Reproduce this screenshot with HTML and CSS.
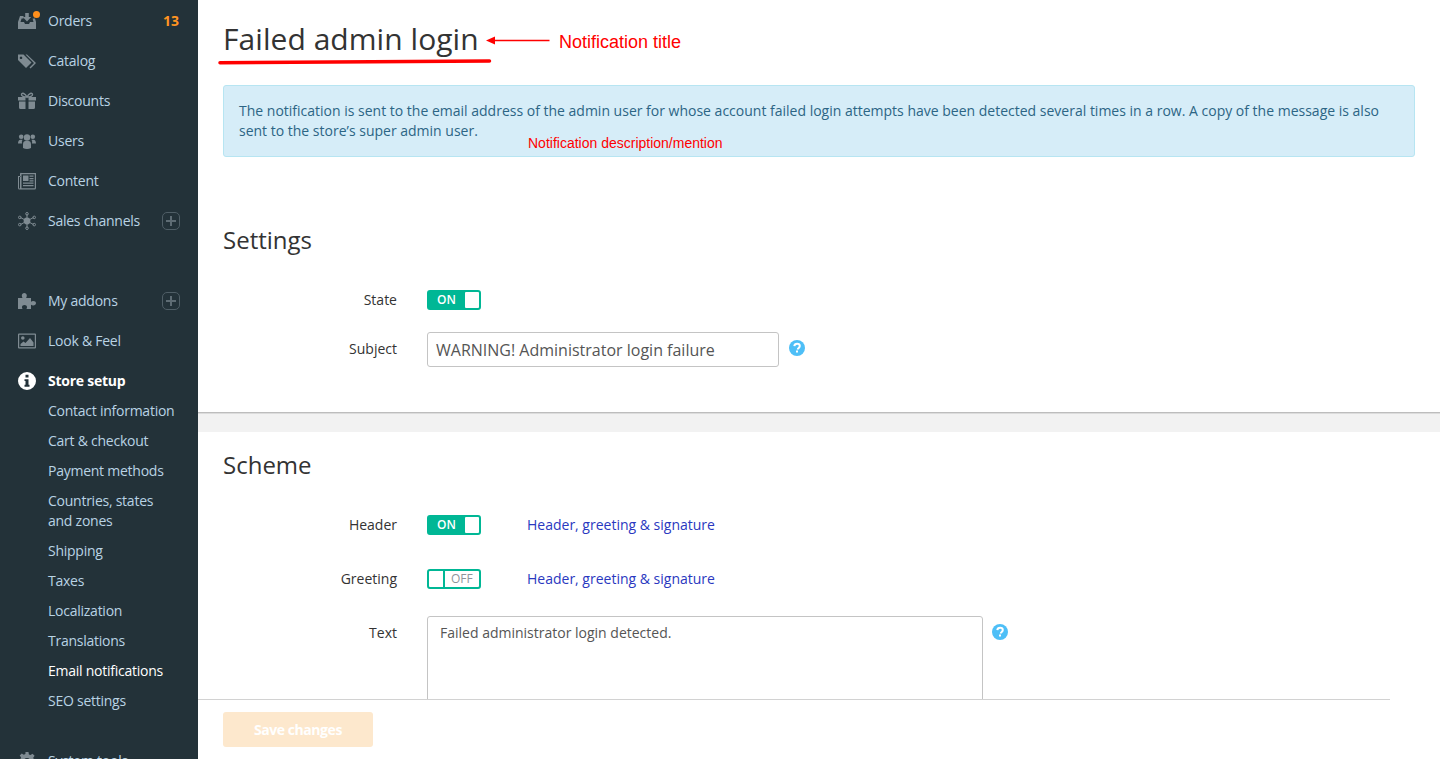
FILE: index.html
```html
<!DOCTYPE html>
<html lang="en">
<head>
    <meta charset="UTF-8">
    <title>Failed admin login</title>
    <link rel="stylesheet" href="styles.css">
</head>
<body>
<div class="page">
    <div class="sidebar">
        <ul class="nav">
            <li class="nav-item">
                <svg class="nav-icon" viewBox="0 0 18 18"><path d="M0 17v-7l2-6h3.500v2.400H3.600L2.500 10H6l1 2h4l1-2h3.500l-.9-3.600H17l1 3.600v7z"/><path d="M7.200 1h3.600v4h2.400L9 9.600 4.800 5h2.400z"/><circle class="dot" cx="18.500" cy="2.500" r="3.500"/></svg>
                <span class="nav-label">Orders</span>
                <span class="badge">13</span>
            </li>
            <li class="nav-item">
                <svg class="nav-icon" viewBox="0 0 18 18"><path d="M0 2.500h5.500l8 8-5.500 5.500-8-8zM3 4.500a1.300 1.300 0 1 0 .01 0z" fill-rule="evenodd"/><path d="M7.500 2.500h1.500l9 8.500-5.500 5.500-1-1 4.500-4.500z"/></svg>
                <span class="nav-label">Catalog</span>
            </li>
            <li class="nav-item">
                <svg class="nav-icon" viewBox="0 0 18 18"><path d="M0 5h7.500v3.500H0zM10.500 5H18v3.500h-7.500zM1 9.500h6.500V17H2.500A1.500 1.500 0 0 1 1 15.500zM10.500 9.500H17v6a1.500 1.500 0 0 1-1.500 1.500h-5z"/><path d="M9 5C7 1 4 .5 3.500 2.300 3.200 4 6 5 9 5c3 0 5.800-1 5.500-2.700C14 .5 11 1 9 5z" fill="none" stroke="#7f8b92" stroke-width="1.400"/></svg>
                <span class="nav-label">Discounts</span>
            </li>
            <li class="nav-item">
                <svg class="nav-icon" viewBox="0 0 18 18"><circle cx="3.200" cy="4.800" r="2.300"/><circle cx="14.800" cy="4.800" r="2.300"/><circle cx="9" cy="5.500" r="3.200"/><path d="M0 12c0-3 1-4.200 2.500-4.200h2A4.500 4.500 0 0 0 4 11.500H0zM18 12c0-3-1-4.200-2.500-4.200h-2a4.500 4.500 0 0 1 .5 3.700h4zM5 16v-3.500C5 10 6 9 7.500 9h3c1.500 0 2.500 1 2.500 3.500V16c-2.500 1.300-5.500 1.300-8 0z"/></svg>
                <span class="nav-label">Users</span>
            </li>
            <li class="nav-item">
                <svg class="nav-icon" viewBox="0 0 18 18"><path d="M3.500 1H18v15a1.500 1.500 0 0 1-1.500 1.500h-15A1.500 1.500 0 0 1 0 16V4h2.500v1H1v11a.5.5 0 0 0 1 0V2a1 1 0 0 1 1.500-1zM3.500 2.200V16a2 2 0 0 1-.1.300h13a.4.4 0 0 0 .4-.3V2.200z" fill-rule="evenodd"/><path d="M5 3.500h5.500V9H5zM11.500 3.500h4v1.200h-4zM11.500 6h4v1.200h-4zM11.500 8.300h4v1.200h-4zM5 10.500h10.500v1.200H5zM5 13h10.500v1.200H5z"/></svg>
                <span class="nav-label">Content</span>
            </li>
            <li class="nav-item">
                <svg class="nav-icon" viewBox="0 0 18 18"><g fill="none" stroke="#7f8b92" stroke-width="1"><path d="M9 9 9 2M9 9 9 16M9 9 2.500 5.500M9 9 15.500 5.500M9 9 2.500 12.500M9 9 15.500 12.500"/><circle cx="9" cy="1.800" r="1.300"/><circle cx="9" cy="16.200" r="1.300"/><circle cx="1.800" cy="5.400" r="1.300"/><circle cx="16.200" cy="5.400" r="1.300"/><circle cx="1.800" cy="12.600" r="1.300"/><circle cx="16.200" cy="12.600" r="1.300"/></g><circle cx="9" cy="9" r="3.400"/></svg>
                <span class="nav-label">Sales channels</span>
                <span class="plus"></span>
            </li>
            <li class="nav-item nav-gap">
                <svg class="nav-icon" viewBox="0 0 18 18"><path d="M0 6h4.500C4 5 3.800 4.500 3.800 3.500 3.800 2 5 1 6.300 1s2.500 1 2.500 2.500c0 1-.2 1.500-.7 2.500H13v3.800c1-.5 1.500-.7 2.200-.7C16.800 9.100 18 10 18 11.200s-1.200 2.200-2.800 2.200c-.7 0-1.200-.2-2.200-.7V17H8.500c.4-1 .5-1.400.5-2 0-1.200-1.100-2-2.500-2S4 13.800 4 15c0 .6.100 1 .5 2H0z"/></svg>
                <span class="nav-label">My addons</span>
                <span class="plus"></span>
            </li>
            <li class="nav-item">
                <svg class="nav-icon" viewBox="0 0 18 18"><path d="M1 1.500h16A1 1 0 0 1 18 2.500v13a1 1 0 0 1-1 1H1a1 1 0 0 1-1-1v-13a1 1 0 0 1 1-1zM1.200 2.700v12.600h15.600V2.700z" fill-rule="evenodd"/><circle cx="4.800" cy="6" r="1.800"/><path d="M2.500 14v-2l3-2.500 2 1.500 4.500-5 3.500 4.500V14z"/></svg>
                <span class="nav-label">Look &amp; Feel</span>
            </li>
            <li class="nav-item active">
                <svg class="nav-icon" viewBox="0 0 18 18"><path class="white" fill-rule="evenodd" d="M9 0a9 9 0 1 1 0 18A9 9 0 0 1 9 0zM7.500 2.800v2.700h3V2.800zM6.500 7.300v1.800h1v3.700h-1v1.900h5v-1.900h-1V7.300z"/></svg>
                <span class="nav-label">Store setup</span>
            </li>
            <li>
                <ul class="subnav">
                    <li>Contact information</li>
                    <li>Cart &amp; checkout</li>
                    <li>Payment methods</li>
                    <li>Countries, states<br>and zones</li>
                    <li>Shipping</li>
                    <li>Taxes</li>
                    <li>Localization</li>
                    <li>Translations</li>
                    <li class="current">Email notifications</li>
                    <li>SEO settings</li>
                </ul>
            </li>
            <li class="nav-item">
                <svg class="nav-icon" viewBox="0 0 18 18"><path fill-rule="evenodd" d="M7.500 0h3l.4 2.400 1.600.7 2-1.400 2.100 2.100-1.400 2 .7 1.600 2.100.4v3l-2.100.4-.7 1.600 1.400 2-2.100 2.100-2-1.400-1.600.7-.4 2.100h-3l-.4-2.100-1.600-.7-2 1.400-2.100-2.100 1.400-2-.7-1.600L0 10.500v-3l2.400-.4.700-1.600-1.400-2 2.100-2.100 2 1.400 1.600-.7zM9 6a3 3 0 1 0 0 6 3 3 0 0 0 0-6z"/></svg>
                <span class="nav-label">System tools</span>
            </li>
        </ul>
    </div>

    <div class="main">
        <div class="section">
            <h1>Failed admin login</h1>
            <div class="alert">The notification is sent to the email address of the admin user for whose account failed login attempts have been detected several times in a row. A copy of the message is also sent to the store’s super admin user.</div>

            <h2 class="settings-title">Settings</h2>
            <div class="row first-row">
                <div class="label">State</div>
                <div class="toggle on"><span>ON</span><i></i></div>
            </div>
            <div class="row subject-row">
                <div class="label label-input">Subject</div>
                <div class="input">WARNING! Administrator login failure</div>
                <svg class="help" viewBox="0 0 16 16"><circle cx="8" cy="8" r="8"/><path d="M5.300 6.200C5.500 4.600 6.600 3.800 8.100 3.800c1.600 0 2.700.9 2.700 2.200 0 1.900-2 1.900-2 3.400" fill="none" stroke="#fff" stroke-width="2"/><rect x="7" y="10.500" width="2" height="2" fill="#fff"/></svg>
            </div>
        </div>

        <div class="section scheme">
            <h2>Scheme</h2>
            <div class="row first-row">
                <div class="label">Header</div>
                <div class="toggle on"><span>ON</span><i></i></div>
                <a class="link">Header, greeting &amp; signature</a>
            </div>
            <div class="row greeting-row">
                <div class="label">Greeting</div>
                <div class="toggle off"><i></i><span>OFF</span></div>
                <a class="link">Header, greeting &amp; signature</a>
            </div>
            <div class="row text-row">
                <div class="label label-input">Text</div>
                <div class="textarea">Failed administrator login detected.</div>
                <svg class="help" viewBox="0 0 16 16"><circle cx="8" cy="8" r="8"/><path d="M5.300 6.200C5.500 4.600 6.600 3.800 8.100 3.800c1.600 0 2.700.9 2.700 2.200 0 1.900-2 1.900-2 3.400" fill="none" stroke="#fff" stroke-width="2"/><rect x="7" y="10.500" width="2" height="2" fill="#fff"/></svg>
            </div>
        </div>

        <div class="footer">
            <button class="save">Save changes</button>
        </div>

        <!-- red notes drawn on top of the screenshot -->
        <svg class="marks" viewBox="0 0 400 80">
            <path d="M22 62.800 291.500 61" fill="none" stroke="#f00" stroke-width="3.500" stroke-linecap="round"/>
            <path d="M296 40.500H351.500" stroke="#f00" stroke-width="1.500"/>
            <path d="M288 40.500 297 36.500v8z" fill="#f00"/>
        </svg>
        <div class="note note-title">Notification title</div>
        <div class="note note-desc">Notification description/mention</div>
    </div>
</div>
</body>
</html>
```

FILE: styles.css
```css
*{
    margin: 0;
    padding: 0;
    box-sizing: border-box;
}
html, body{
    height: 759px;
    overflow: hidden;
}
body{
    font-family: "Open Sans", sans-serif;
    font-size: 14px;
    line-height: 20px;
    color: #333;
    background: #fff;
}
.page{
    display: flex;
    height: 759px;
    overflow: hidden;
}

/* sidebar */
.sidebar{
    width: 198px;
    flex-shrink: 0;
    background: #233239;
    padding-top: 1px;
    overflow: hidden;
    letter-spacing: -0.25px;
}
.nav, .subnav{
    list-style: none;
}
.nav-item{
    display: flex;
    align-items: center;
    height: 40px;
    padding: 0 18px;
    color: #b9d3e4;
}
.nav-gap{
    margin-top: 40px;
}
.nav-icon{
    width: 18px;
    height: 18px;
    flex-shrink: 0;
    margin-right: 12px;
    fill: #7f8b92;
    overflow: visible;
}
.nav-icon .dot{
    fill: #ff8f1c;
}
.nav-icon .white{
    fill: #fff;
}
.nav-label{
    flex: 1;
}
.badge{
    margin-right: 1px;
    color: #ff9522;
    font-weight: 700;
    letter-spacing: 0;
}
.plus{
    position: relative;
    width: 18px;
    height: 18px;
    border: 1px solid #4f5e66;
    border-radius: 5px;
}
.plus::before, .plus::after{
    content: "";
    position: absolute;
    background: #5e6c74;
}
.plus::before{
    left: 3px;
    right: 3px;
    top: 7px;
    height: 2px;
}
.plus::after{
    top: 3px;
    bottom: 3px;
    left: 7px;
    width: 2px;
}
.active{
    color: #fff;
    font-weight: 700;
}
.subnav{
    margin-top: -5px;
    margin-bottom: 25px;
    padding-left: 48px;
    color: #b9d3e4;
}
.subnav li{
    padding: 5px 0;
}
.subnav .current{
    color: #fff;
}

/* main */
.main{
    position: relative;
    flex: 1;
    overflow: hidden;
    background: #f2f2f2;
}
.section{
    padding: 19px 25px 0;
    height: 413px;
    border-bottom: 1px solid #bdbdbd;
    background: #fff;
    box-shadow: 0 1px 0 #dcdcdc;
}
h1{
    font-size: 30px;
    font-weight: 400;
    line-height: 40px;
    letter-spacing: 0.05px;
    color: #333;
}
h2{
    font-size: 24px;
    font-weight: 400;
    line-height: 30px;
    color: #333;
}
.alert{
    margin-top: 26px;
    padding: 15px;
    border: 1px solid #b7e5f2;
    border-radius: 3px;
    background: #d6edf8;
    color: #2c6585;
}
.settings-title{
    margin-top: 68px;
}
.row{
    display: flex;
    align-items: flex-start;
}
.first-row{
    margin-top: 35px;
}
.subject-row{
    margin-top: 22px;
}
.greeting-row{
    margin-top: 34px;
}
.text-row{
    margin-top: 27px;
}
.label{
    width: 174px;
    margin-right: 30px;
    text-align: right;
}
.label-input{
    padding-top: 7px;
}
.toggle{
    display: flex;
    align-items: center;
    width: 54px;
    height: 20px;
    border: 2px solid #00b795;
    border-radius: 3px;
    font-size: 12px;
    font-weight: 600;
    line-height: 16px;
}
.toggle.on{
    justify-content: space-between;
    padding-left: 8px;
    background: #00b795;
    color: #fff;
}
.toggle.on i{
    width: 14px;
    height: 16px;
    background: #fff;
    border-radius: 1px;
}
.toggle.off{
    color: #8e9499;
    font-weight: 400;
}
.toggle.off i{
    width: 16px;
    height: 16px;
    border-right: 2px solid #00b795;
    margin-right: 6px;
}
.input{
    width: 352px;
    height: 35px;
    padding: 6px 8px;
    border: 1px solid #c4c4c4;
    border-radius: 3px;
    font-size: 16px;
    line-height: 23px;
    color: #555;
}
.textarea{
    width: 556px;
    height: 200px;
    padding: 6px 12px;
    border: 1px solid #c4c4c4;
    border-radius: 3px;
    color: #555;
}
.help{
    width: 16px;
    height: 16px;
    flex-shrink: 0;
    margin: 8px 0 0 10px;
    fill: #4ebff7;
}
.text-row .help{
    margin-left: 9px;
}
.link{
    margin-left: 46px;
    color: #2a38c0;
}
.scheme{
    margin-top: 19px;
    padding-top: 18px;
    border-bottom: 0;
    box-shadow: none;
    height: 400px;
}

/* sticky footer */
.footer{
    position: absolute;
    left: 0;
    bottom: 0;
    width: 1192px;
    height: 60px;
    padding: 12px 25px;
    border-top: 1px solid #d2d2d2;
    background: #fff;
}
.save{
    display: block;
    width: 150px;
    height: 35px;
    border: 0;
    border-radius: 3px;
    background: #fde8cd;
    color: #fff;
    font-family: "Open Sans", sans-serif;
    font-size: 14px;
    font-weight: 700;
    letter-spacing: -0.45px;
}

/* red notes */
.marks{
    position: absolute;
    top: 0;
    left: 0;
    width: 400px;
    height: 80px;
}
.note{
    position: absolute;
    font-family: "Liberation Sans", Arial, sans-serif;
    color: #f00;
}
.note-title{
    left: 361px;
    top: 32px;
    font-size: 18px;
}
.note-desc{
    left: 330px;
    top: 133px;
    font-size: 14px;
}
```
